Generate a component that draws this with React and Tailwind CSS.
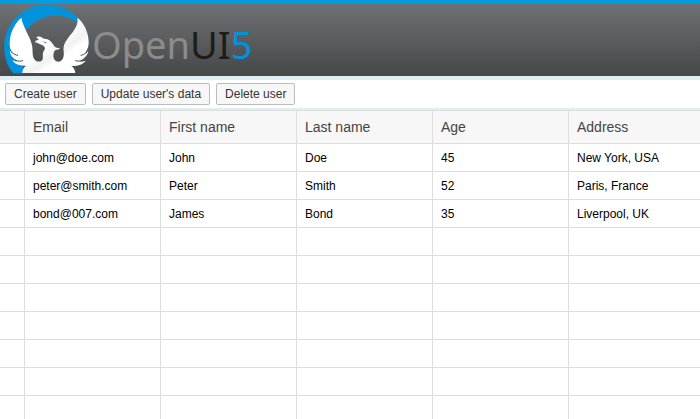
const columns = [
  { key: "email", label: "Email" },
  { key: "firstName", label: "First name" },
  { key: "lastName", label: "Last name" },
  { key: "age", label: "Age" },
  { key: "address", label: "Address" },
];

const users = [
  { email: "john@doe.com", firstName: "John", lastName: "Doe", age: 45, address: "New York, USA" },
  { email: "peter@smith.com", firstName: "Peter", lastName: "Smith", age: 52, address: "Paris, France" },
  { email: "bond@007.com", firstName: "James", lastName: "Bond", age: 35, address: "Liverpool, UK" },
];

const actions = ["Create user", "Update user's data", "Delete user"];

const VISIBLE_ROWS = 10;

function PhoenixLogo() {
  return (
    <svg viewBox="0 12 270 216" className="h-[72px] w-[90px] shrink-0" aria-hidden="true">
      <defs>
        <linearGradient id="wing" x1="0" y1="0" x2="1" y2="1">
          <stop offset="0.5" stopColor="#ffffff" />
          <stop offset="0.62" stopColor="#f1f1f1" />
          <stop offset="0.7" stopColor="#ffffff" />
        </linearGradient>
      </defs>
      <path
        fill="#0093dc"
        d="M40 220C20 198 12 168 13 138C15 68 70 14 140 14C178 14 210 28 233 53L233 68C207 50 180 44 152 48C120 53 94 70 75 94L62 150L72 220Z"
      />
      <path
        fill="url(#wing)"
        d="M64 53C42 72 29 102 29 130C29 142 31 150 38 159C34 157 31 155 29 152C31 166 39 176 54 182C47 184 42 183 37 181C43 192 58 198 78 197C71 202 67 209 67 219L226 219C225 210 221 203 214 198C233 199 249 193 257 182C250 185 244 185 238 183C252 177 262 167 265 153C262 156 259 158 255 159C263 149 267 138 266 124C265 97 252 67 232 53C236 72 225 88 213 103C199 120 188 135 191 154C193 171 188 184 177 185C163 186 158 173 161 160C162 154 165 149 170 149C175 149 178 147 180 143C173 145 168 144 163 139C157 129 151 121 142 118C136 116 131 117 128 115C125 110 116 107 108 112C111 113 114 116 116 120C112 119 107 121 104 126C111 127 117 132 124 134C134 137 138 144 132 152C126 160 130 170 128 177C125 188 108 187 102 176C96 165 99 151 96 136C92 111 69 83 64 53Z"
      />
      <path fill="#55575a" d="M130 124C133 125 136 127 140 128C137 131 132 129 130 124Z" />
      <path
        fill="none"
        stroke="#4b4c4f"
        strokeWidth="3"
        strokeLinecap="round"
        d="M34 156C41 163 47 165 53 166M46 182C57 184 62 184 68 182M260 157C254 162 249 165 243 166M248 182C238 184 233 184 227 182"
      />
    </svg>
  );
}

function Header() {
  return (
    <header className="flex items-center border-t-4 border-[#009de0] bg-linear-to-b from-[#6f7275] to-[#464749]">
      <PhoenixLogo />
      <h1 className="pt-2 pl-[2px] font-['Noto_Sans','Open_Sans',sans-serif] text-[38px] leading-[62px] font-normal text-[#8c8c8c]">
        Open<span className="text-[#1d1d1b]">UI</span>
        <span className="text-[#0093dc]">5</span>
      </h1>
    </header>
  );
}

function Toolbar() {
  return (
    <div role="toolbar" className="flex gap-[6px] border-t-4 border-b-2 border-[#dfeff1] bg-white px-[5px] py-[3px]">
      {actions.map((action) => (
        <button
          key={action}
          type="button"
          className="h-[22px] rounded-[2px] border border-[#bcbcbc] bg-[#f7f7f7] px-2 text-xs leading-5 whitespace-nowrap text-[#333333] hover:bg-[#eaeaea]"
        >
          {action}
        </button>
      ))}
    </div>
  );
}

function UserTable() {
  const rows = Array.from({ length: VISIBLE_ROWS }, (_, i) => users[i] ?? {});

  return (
    <table className="w-[calc(100%+5px)] table-fixed border-separate border-spacing-0 border-t border-[#dddddd] text-left">
      <thead>
        <tr className="h-[33px] bg-[#f7f7f7]">
          <td className="w-[25px] border-r border-b border-[#dddddd]" />
          {columns.map((col) => (
            <th
              key={col.key}
              scope="col"
              className="border-r border-b border-[#dddddd] px-2 text-sm leading-5 font-normal text-[#444444]"
            >
              {col.label}
            </th>
          ))}
        </tr>
      </thead>
      <tbody>
        {rows.map((user, i) => (
          <tr key={i} className="h-7">
            <td className="border-r border-b border-[#dddddd]" />
            {columns.map((col) => (
              <td key={col.key} className="truncate border-r border-b border-[#dddddd] px-2 text-xs text-black">
                {user[col.key]}
              </td>
            ))}
          </tr>
        ))}
      </tbody>
    </table>
  );
}

export default function App() {
  return (
    <div className="h-screen overflow-hidden bg-white font-['Liberation_Sans',Arial,sans-serif]">
      <Header />
      <Toolbar />
      <UserTable />
    </div>
  );
}
